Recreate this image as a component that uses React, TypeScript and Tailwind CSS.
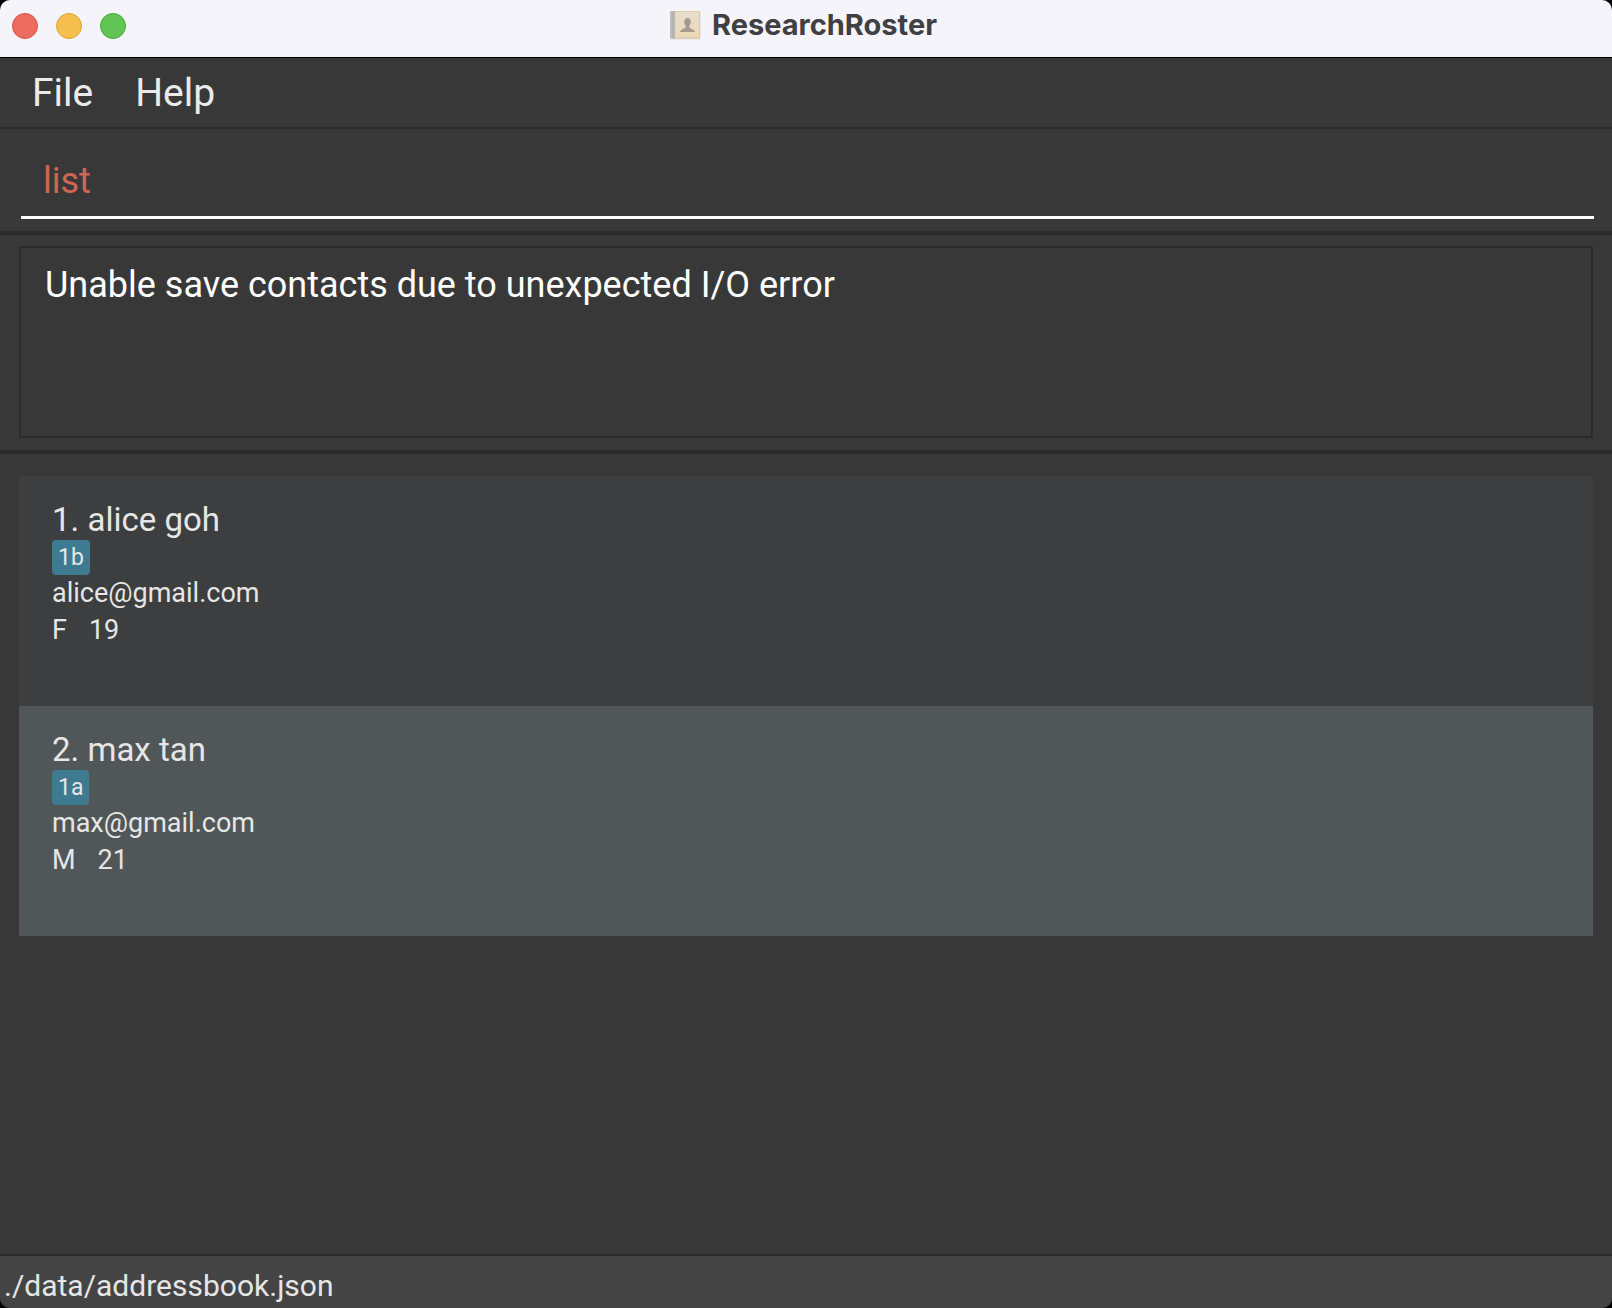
import { useState } from "react";

type Person = {
  name: string;
  tag: string;
  email: string;
  gender: string;
  age: number;
};

const people: Person[] = [
  { name: "alice goh", tag: "1b", email: "alice@gmail.com", gender: "F", age: 19 },
  { name: "max tan", tag: "1a", email: "max@gmail.com", gender: "M", age: 21 },
];

function BookIcon() {
  return (
    <svg viewBox="0 0 32 30" className="h-[30px] w-8" aria-hidden="true">
      <defs>
        <linearGradient id="cover" x1="0" y1="0" x2="0" y2="1">
          <stop offset="0" stopColor="#e9dece" />
          <stop offset="1" stopColor="#ecd8b4" />
        </linearGradient>
        <linearGradient id="spine" x1="0" y1="0" x2="1" y2="0">
          <stop offset="0" stopColor="#c4c1c4" />
          <stop offset="0.6" stopColor="#b3afb0" />
          <stop offset="1" stopColor="#cfc7bf" />
        </linearGradient>
      </defs>
      <rect x="1" y="1.5" width="30.5" height="28" rx="1.5" fill="#dfdbd9" />
      <rect x="1" y="1" width="30" height="27.5" rx="1.2" fill="#dcc9a8" />
      <rect x="5" y="1.8" width="25" height="25.6" fill="url(#cover)" />
      <rect x="1" y="1" width="5.5" height="27.5" rx="1" fill="url(#spine)" />
      <path
        d="M18.500 8c2.100 0 3.300 1.600 3.300 3.900 0 1.700-.7 3-1.500 3.800v1.500c.3 1.400 5.100 1.700 5.700 4.800H11c.6-3.100 5.400-3.400 5.700-4.800v-1.500c-.8-.8-1.500-2.100-1.500-3.800 0-2.300 1.200-3.900 3.300-3.900z"
        fill="#a39b92"
      />
    </svg>
  );
}

function TitleBar() {
  return (
    <header className="grid h-[58px] grid-cols-[1fr_auto_1fr] items-center border-b border-black bg-[#f5f4fb] pb-1.5">
      <div className="flex gap-[18px] pl-3">
        <button type="button" aria-label="Close" className="size-[26px] rounded-full border border-[#dd5144] bg-[#ed6a5e]" />
        <button type="button" aria-label="Minimize" className="size-[26px] rounded-full border border-[#dfa32f] bg-[#f5bf4f]" />
        <button type="button" aria-label="Zoom" className="size-[26px] rounded-full border border-[#43ab35] bg-[#61c554]" />
      </div>
      <div className="flex items-center gap-[11px] pr-1.5 pb-0.5">
        <BookIcon />
        <h1 className="font-['Inter',sans-serif] text-[29px] leading-8 font-bold text-[#404042]">ResearchRoster</h1>
      </div>
    </header>
  );
}

function PersonCard({ person, index }: { person: Person; index: number }) {
  return (
    <li className="flex h-[230px] flex-col items-start px-[33px] pt-[22px] text-[#e6e6e6] odd:bg-[#3c3e3f] even:bg-[#515658]">
      <h2 className="pt-0.5 text-[33px] leading-10">
        {index}. {person.name}
      </h2>
      <span className="rounded bg-[#3e7b91] px-[6px] text-[23px] leading-[35px]">{person.tag}</span>
      <p className="text-[27px] leading-[37px]">{person.email}</p>
      <p className="flex gap-[22px] text-[27px] leading-[37px]">
        <span>{person.gender}</span>
        <span>{person.age}</span>
      </p>
    </li>
  );
}

export default function App() {
  const [command, setCommand] = useState("list");

  return (
    <div className="min-h-screen bg-black font-['Roboto',sans-serif]">
      <div className="flex min-h-screen flex-col overflow-hidden rounded-[10px] bg-[#383838]">
        <TitleBar />
        <nav className="flex h-[71px] items-center gap-[42px] border-b-2 border-[#2b2b2b] px-8 text-[39px] leading-[46px] text-[#ebebeb]">
          <button type="button">File</button>
          <button type="button">Help</button>
        </nav>
        <div className="border-b-4 border-[#2b2b2b] pr-[18px] pl-[21px] pt-[22px] pb-3">
          <input
            aria-label="Command"
            value={command}
            onChange={(e) => setCommand(e.target.value)}
            className="block h-[68px] w-full border-b-[3px] border-white bg-transparent px-[22px] pb-1.5 text-[36px] text-[#d06651] outline-none"
          />
        </div>
        <div className="border-b-4 border-[#2b2b2b] px-[19px] pt-[11px] pb-3">
          <textarea
            aria-label="Result"
            readOnly
            value="Unable save contacts due to unexpected I/O error"
            className="block h-[192px] w-full resize-none border-2 border-[#2b2b2b] bg-transparent px-6 py-[15px] text-[36px] leading-[44px] text-white outline-none"
          />
        </div>
        <main className="flex-1 px-[19px] py-[22px]">
          <ol>
            {people.map((person, i) => (
              <PersonCard key={person.email} person={person} index={i + 1} />
            ))}
          </ol>
        </main>
        <footer className="border-t-2 border-[#2b2b2b] bg-[#444444] px-1 pt-3 pb-1 text-[30px] leading-9 text-[#e6e6e6]">
          ./data/addressbook.json
        </footer>
      </div>
    </div>
  );
}
